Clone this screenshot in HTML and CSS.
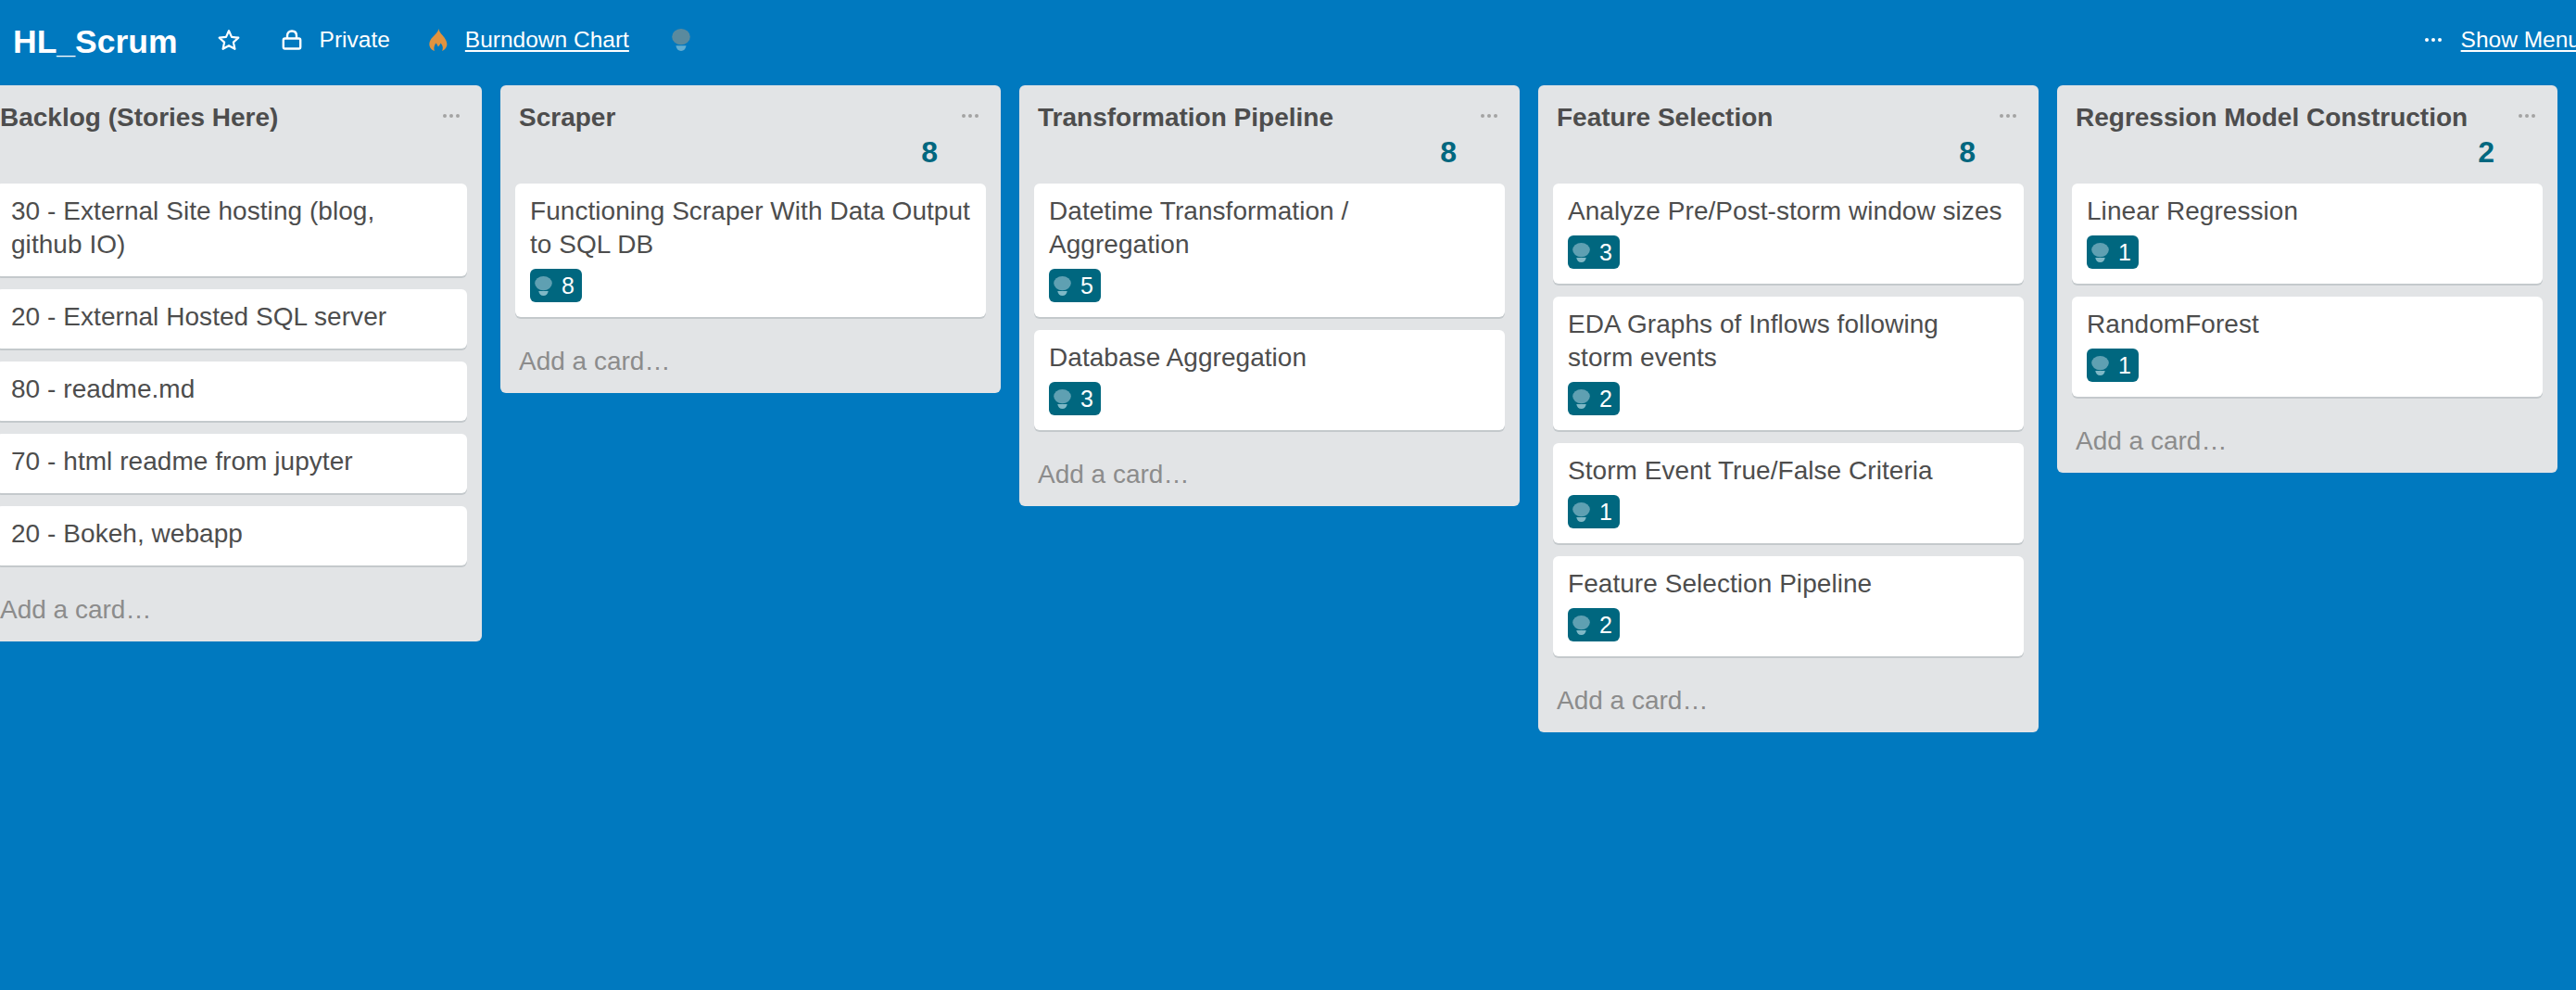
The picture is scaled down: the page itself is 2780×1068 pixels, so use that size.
FILE: index.html

```html
<!DOCTYPE html>
<html>
<head>
  <title>HL_Scrum</title>
  <link rel="stylesheet" href="styles.css">
</head>
<body>
  <svg class="defs" width="0" height="0">
    <symbol id="bulb" viewBox="0 0 20 21" preserveAspectRatio="none">
      <ellipse cx="10" cy="7.600" rx="9.800" ry="7.600"/>
      <path class="bulb-neck" d="M4.500 16H15.500C15 19 13 21 10 21C7 21 5 19 4.500 16Z"/>
    </symbol>
  </svg>

  <div class="header">
    <span class="board-name">HL_Scrum</span>
    <svg class="star" viewBox="0 0 24 24"><path d="M12 2.200L15 8.900L22.300 9.700L16.900 14.600L18.400 21.800L12 18.200L5.600 21.800L7.100 14.600L1.700 9.700L9 8.900Z"/></svg>
    <svg class="lock" viewBox="0 0 22 22"><path d="M6 9V6.500C6 3.500 8 1.500 11 1.500C14 1.500 16 3.500 16 6.500V9M3.500 9.500H18.500C19.500 9.500 20.200 10.200 20.200 11.200V18.800C20.200 19.800 19.500 20.500 18.500 20.500H3.500C2.500 20.500 1.800 19.800 1.800 18.800V11.200C1.800 10.200 2.500 9.500 3.500 9.500Z"/></svg>
    <span class="private">Private</span>
    <svg class="flame" viewBox="0 0 20 24"><path d="M10.500 0C11 4 14 6 16.500 9.500C19 13 20 16 19 19C18 21.500 16 23.500 14 24C15.500 21.500 15 18 12.500 15.500C12 17.500 10.800 18 10 19.500C9 18 8.500 16.500 7.500 15.500C5.500 18 4.800 21.500 6 24C3.500 23.500 1.500 21.500 .7 19C-.5 15 1.500 11.500 4 9C6.500 6.500 9.500 4 10.500 0Z"/></svg>
    <a class="header-link">Burndown Chart</a>
    <svg class="header-bulb"><use href="#bulb"/></svg>
    <span class="dots">
      <i></i><i></i><i></i>
    </span>
    <a class="header-link show-menu">Show Menu</a>
  </div>

  <div class="board">
    <div class="list">
      <div class="list-head">
        <h2>Backlog (Stories Here)</h2>
        <span class="list-menu"><i></i><i></i><i></i></span>
      </div>
      <div class="list-total"></div>
      <div class="card"><p>30 - External Site hosting (blog,<br>github IO)</p></div>
      <div class="card"><p>20 - External Hosted SQL server</p></div>
      <div class="card"><p>80 - readme.md</p></div>
      <div class="card"><p>70 - html readme from jupyter</p></div>
      <div class="card"><p>20 - Bokeh, webapp</p></div>
      <div class="add-card">Add a card…</div>
    </div>

    <div class="list">
      <div class="list-head">
        <h2>Scraper</h2>
        <span class="list-menu"><i></i><i></i><i></i></span>
      </div>
      <div class="list-total">8</div>
      <div class="card">
        <p>Functioning Scraper With Data Output to SQL DB</p>
        <span class="badge"><svg><use href="#bulb"/></svg>8</span>
      </div>
      <div class="add-card">Add a card…</div>
    </div>

    <div class="list">
      <div class="list-head">
        <h2>Transformation Pipeline</h2>
        <span class="list-menu"><i></i><i></i><i></i></span>
      </div>
      <div class="list-total">8</div>
      <div class="card">
        <p>Datetime Transformation / Aggregation</p>
        <span class="badge"><svg><use href="#bulb"/></svg>5</span>
      </div>
      <div class="card">
        <p>Database Aggregation</p>
        <span class="badge"><svg><use href="#bulb"/></svg>3</span>
      </div>
      <div class="add-card">Add a card…</div>
    </div>

    <div class="list">
      <div class="list-head">
        <h2>Feature Selection</h2>
        <span class="list-menu"><i></i><i></i><i></i></span>
      </div>
      <div class="list-total">8</div>
      <div class="card">
        <p>Analyze Pre/Post-storm window sizes</p>
        <span class="badge"><svg><use href="#bulb"/></svg>3</span>
      </div>
      <div class="card">
        <p>EDA Graphs of Inflows following storm events</p>
        <span class="badge"><svg><use href="#bulb"/></svg>2</span>
      </div>
      <div class="card">
        <p>Storm Event True/False Criteria</p>
        <span class="badge"><svg><use href="#bulb"/></svg>1</span>
      </div>
      <div class="card">
        <p>Feature Selection Pipeline</p>
        <span class="badge"><svg><use href="#bulb"/></svg>2</span>
      </div>
      <div class="add-card">Add a card…</div>
    </div>

    <div class="list">
      <div class="list-head">
        <h2>Regression Model Construction</h2>
        <span class="list-menu"><i></i><i></i><i></i></span>
      </div>
      <div class="list-total">2</div>
      <div class="card">
        <p>Linear Regression</p>
        <span class="badge"><svg><use href="#bulb"/></svg>1</span>
      </div>
      <div class="card">
        <p>RandomForest</p>
        <span class="badge"><svg><use href="#bulb"/></svg>1</span>
      </div>
      <div class="add-card">Add a card…</div>
    </div>
  </div>
</body>
</html>
```

FILE: styles.css

```css
html, body { margin: 0; height: 100%; }
body { background: #0079bf; color: #4d4d4d; font-family: "Liberation Sans", Arial, sans-serif; overflow: hidden; }
.defs { position: absolute; }
.bulb-neck { fill: var(--neck); }

.header { display: flex; align-items: center; height: 92px; padding: 0 0 6px 14px; box-sizing: border-box; color: #fff; font-size: 24.500px; }
.board-name { font-size: 35.500px; font-weight: bold; margin-right: 43px; position: relative; top: 2px; }
.star { width: 24px; height: 24px; margin-right: 45px; fill: none; stroke: #fff; stroke-width: 2.2; stroke-linejoin: round; }
.lock { width: 22px; height: 22px; margin-right: 19px; fill: none; stroke: #fff; stroke-width: 2.4; }
.private { margin-right: 42px; }
.flame { width: 20px; height: 24px; margin-right: 19px; fill: #e2933f; filter: blur(.6px); }
.header-link { color: #fff; text-decoration: underline; text-underline-offset: 3px; }
.header-bulb { width: 20px; height: 24px; margin-left: 46px; fill: #5a8a9e; --neck: #62acd0; filter: blur(.6px); }
.dots { display: flex; gap: 3px; margin-left: auto; margin-right: 21px; }
.dots i { width: 4px; height: 4px; border-radius: 50%; background: #fff; }
.show-menu { flex-shrink: 0; margin-right: -5px; }

.board { display: flex; align-items: flex-start; gap: 20px; margin-left: -20px; }
.list { flex: 0 0 540px; background: #e2e4e6; border-radius: 6px; padding: 0 16px; box-sizing: border-box; }
.list-head { display: flex; justify-content: space-between; align-items: center; height: 54px; padding: 16px 8px 0 4px; box-sizing: border-box; }
.list-head h2 { margin: 0; font-size: 28px; font-weight: bold; }
.list-menu { display: flex; gap: 3px; margin-top: -5px; }
.list-menu i { width: 4px; height: 4px; border-radius: 50%; background: #a3a3a3; }
.list-total { height: 52px; padding-right: 52px; text-align: right; font-size: 32px; font-weight: bold; line-height: 36px; color: #00677f; }

.card { background: #fff; border-radius: 6px; box-shadow: 0 2px 0 #c4c9cc; padding: 12px 16px 16px; margin-bottom: 14px; }
.card p { margin: 0; font-size: 28px; line-height: 36px; letter-spacing: .05px; }
.badge { display: flex; align-items: center; width: 56px; height: 36px; box-sizing: border-box; margin-top: 8px; padding-left: 5px; border-radius: 6px; background: #00677f; color: #fff; font-size: 25px; }
.badge svg { width: 19px; height: 21px; margin-right: 10px; fill: #5fa0b2; --neck: #7fb8c6; filter: blur(.5px); }
.add-card { height: 58px; padding: 0 4px; margin-top: 24px; line-height: 48px; font-size: 28px; color: #8c8c8c; }
```
